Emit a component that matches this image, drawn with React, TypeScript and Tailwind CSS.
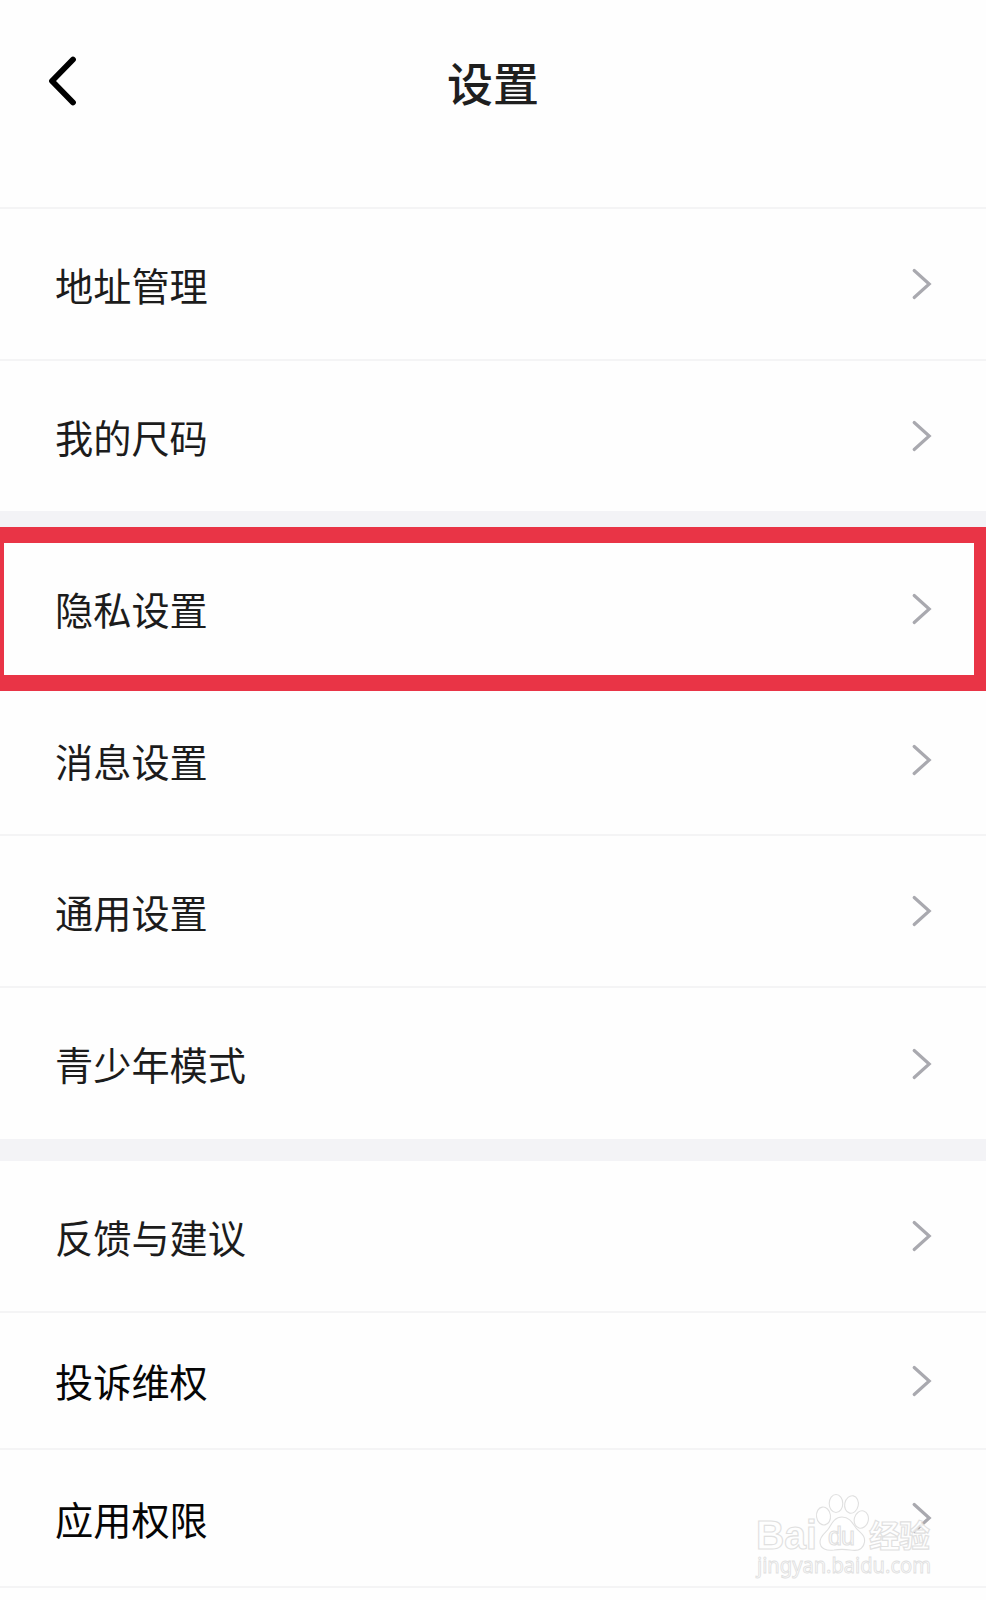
type Item = {
    name: string;
    className: string;
};

const account: Item[] = [
    { name: "地址管理", className: "h-[152px] text-[#1c1c1c]" },
    { name: "我的尺码", className: "h-[150px] text-[#1c1c1c]" },
];

const preferences: Item[] = [
    { name: "隐私设置", className: "h-[153px] text-[#1c1c1c]" },
    { name: "消息设置", className: "h-[150px] text-[#1c1c1c]" },
    { name: "通用设置", className: "h-[152px] text-[#1c1c1c]" },
    { name: "青少年模式", className: "h-[151px] text-[#1c1c1c]" },
];

const support: Item[] = [
    { name: "反馈与建议", className: "h-[152px] text-[#1c1c1c]" },
    { name: "投诉维权", className: "h-[137px] text-[#060606]" },
    { name: "应用权限", className: "h-[136px] text-[#060606]" },
];

function Chevron() {
    return (
        <svg width="22" height="32" viewBox="0 0 22 32" fill="none">
            <path d="M3.2 2.5L18.2 16L3.2 29.5" stroke="#a9a9af" strokeWidth="3.2" strokeLinecap="round" />
        </svg>
    );
}

function Section({ items }: { items: Item[] }) {
    return (
        <ul>
            {items.map((item, index) => (
                <li
                    key={item.name}
                    className={`flex items-center justify-between border-[#f4f4f5] pl-[55px] pr-[53px] ${item.className} ${
                        index < items.length - 1 ? "border-b-2" : ""
                    }`}
                >
                    <span className="pt-[1px] text-[38.2px] leading-[56px]">{item.name}</span>
                    <Chevron />
                </li>
            ))}
        </ul>
    );
}

function Watermark() {
    return (
        <svg
            className="absolute left-[746px] top-[1485px]"
            width="200"
            height="100"
            viewBox="0 0 200 100"
            fill="#fff"
            fillOpacity="0.85"
            stroke="#e0e0e0"
            strokeWidth="1.1"
        >
            {/* Patte */}
            <ellipse cx="77.5" cy="31" rx="7" ry="9" transform="rotate(-8 77.5 31)" />
            <ellipse cx="90" cy="18.5" rx="6.8" ry="9" />
            <ellipse cx="105.5" cy="19.5" rx="6.8" ry="8.8" transform="rotate(12 105.5 19.5)" />
            <ellipse cx="115.3" cy="34.5" rx="7" ry="8.8" transform="rotate(15 115.3 34.5)" />
            <path d="M96 32C104 32 107 39 110 43C114 48 119.5 50 118.5 57C117 66 110 66 104 65C98 64 94 64 88 65C81 66 74 64 74 57C74 50 80 48 83 43C86 38 89 32 96 32Z" />
            <text x="82" y="60" fontSize="25" textLength="27" className="font-['Liberation_Sans']">du</text>
            <text x="10" y="64" fontSize="41" fontWeight="700" textLength="61" lengthAdjust="spacingAndGlyphs" className="font-['Liberation_Sans']">Bai</text>
            <text x="123" y="62" fontSize="31" fontWeight="700" textLength="61" className="font-['Noto_Sans_CJK_SC']">经验</text>
            <text x="11" y="88" fontSize="21" textLength="174" lengthAdjust="spacingAndGlyphs" strokeWidth="0.9" className="font-['Noto_Sans']">jingyan.baidu.com</text>
        </svg>
    );
}

export default function App() {
    return (
        <main className="relative h-[1600px] w-[986px] overflow-hidden bg-[#fefefe] font-['Noto_Sans_CJK_SC',sans-serif]">
            <header className="grid h-[209px] grid-cols-3 border-b-2 border-[#f4f4f5] px-[46px] pt-[50px]">
                <svg className="mt-[2px]" width="34" height="58" viewBox="0 0 34 58" fill="none">
                    <path d="M27 7.5L6 29L27 50.5" stroke="#000" strokeWidth="5.8" strokeLinecap="round" strokeLinejoin="round" />
                </svg>
                <h1 className="text-center text-[46px] leading-[62px] font-medium text-[#1f1f1f]">设置</h1>
            </header>

            <Section items={account} />
            <div className="h-[22px] bg-[#f3f3f6]" />
            <Section items={preferences} />
            <div className="h-[22px] bg-[#f3f3f6]" />
            <div className="border-b-2 border-[#f4f4f5]">
                <Section items={support} />
            </div>

            {/* Cadre rouge autour de l'option mise en avant */}
            <div className="absolute left-0 top-[527px] h-[164px] w-[986px] border-y-[16px] border-l-[4px] border-r-[12px] border-[#e93446]" />
            <Watermark />
        </main>
    );
}
